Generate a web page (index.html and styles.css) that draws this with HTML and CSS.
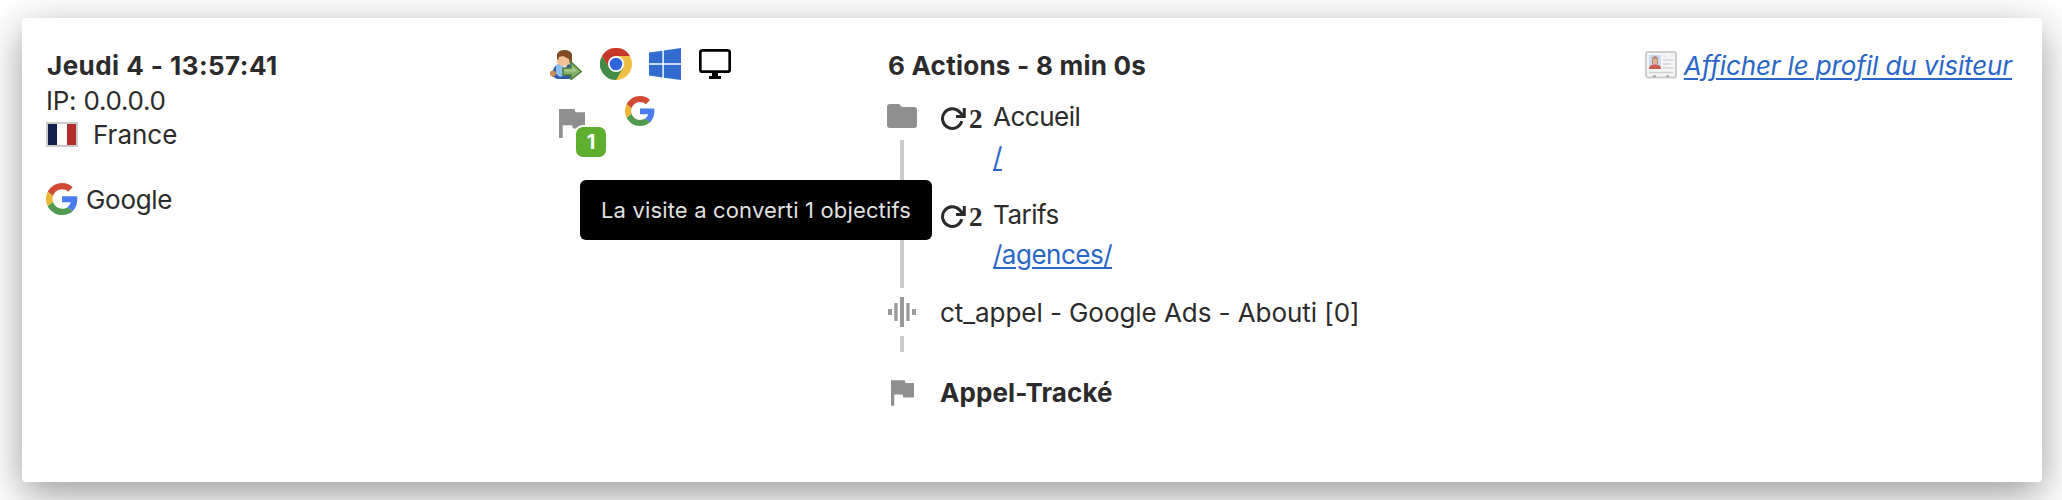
FILE: index.html
```html
<!DOCTYPE html>
<html lang="fr">
<head>
    <meta charset="UTF-8">
    <meta name="viewport" content="width=device-width, initial-scale=1.0">
    <title>Log des visites</title>
    <link rel="stylesheet" href="styles.css">
</head>
<body>
    <svg class="defs" width="0" height="0">
        <symbol id="google" viewBox="0 0 48 48">
            <path fill="#d04a34" d="M24 9.5c3.54 0 6.71 1.22 9.21 3.6l6.85-6.85C35.9 2.38 30.47 0 24 0 14.62 0 6.51 5.38 2.56 13.22l7.98 6.19C12.43 13.72 17.74 9.5 24 9.5z"/>
            <path fill="#4c7bf0" d="M46.98 24.55c0-1.57-.15-3.09-.38-4.55H24v9.02h12.94c-.58 2.96-2.26 5.48-4.78 7.18l7.73 6c4.51-4.18 7.09-10.36 7.09-17.65z"/>
            <path fill="#eeb637" d="M10.53 28.59c-.48-1.45-.76-2.99-.76-4.59s.27-3.14.76-4.59l-7.98-6.19C.92 16.46 0 20.12 0 24c0 3.88.92 7.54 2.56 10.78l7.97-6.19z"/>
            <path fill="#509a4f" d="M24 48c6.48 0 11.93-2.13 15.89-5.81l-7.73-6c-2.15 1.45-4.92 2.3-8.16 2.3-6.26 0-11.57-4.22-13.47-9.91l-7.98 6.19C6.51 42.62 14.62 48 24 48z"/>
        </symbol>
        <symbol id="flag" viewBox="0 0 26 29">
            <path fill="#8f8f8f" d="M0 0h15.5l1 3.2H26v16.3H14l-1-3.3H3.7V29H0z"/>
        </symbol>
        <symbol id="reload" viewBox="0 0 25 23">
            <path fill="none" stroke="#2b2b2b" stroke-width="3" d="M20.8 14.2A9.8 9.8 0 1 1 18.600 5"/>
            <path fill="none" stroke="#2b2b2b" stroke-width="3" d="M23.300 1v8.400h-8.300M22.800 9.200l-4.700-4.500"/>
        </symbol>
    </svg>

    <div class="card">
        <div class="visit-info">
            <div class="title date">Jeudi 4 - 13:57:41</div>
            <div class="line ip">IP: 0.0.0.0</div>
            <div class="line country"><span class="flag-fr"></span>France</div>
            <div class="line referrer"><svg class="icon-google"><use href="#google"/></svg>Google</div>
        </div>

        <div class="visit-icons">
            <div class="icon-row">
                <!-- returning visitor -->
                <svg class="icon" viewBox="0 0 32 32">
                    <path fill="#3459a6" d="M2 28q1-12 8-12h9l6 4-5 11H7z"/>
                    <path fill="#8cc0f2" d="M6 17q6-2 8 1l1 9-5 2-4-3z"/>
                    <path fill="#eef6fc" d="M12 17h5l-2 5z"/>
                    <circle cx="2.800" cy="25.500" r="3" fill="#cf8a50"/>
                    <path fill="#f0c294" d="M7 8h13v7q-2 3-6.500 3T7 15z"/>
                    <path fill="#804a24" d="M7 11V6q2-4 7.500-4T22 6v8l-2 2.500-1-5.500-6-3-4 1-1 3z"/>
                    <path fill="#84b368" stroke="#4f7d3c" stroke-width="1.500" d="M13 20h8v-6l10.300 9.500L21 31.500V27h-8z"/>
                    <path fill="#a9cd90" d="M14.500 21.500H22V18l5 5.500h-12.500z"/>
                </svg>
                <!-- chrome -->
                <svg class="icon" viewBox="0 0 32 32">
                    <circle cx="16" cy="16" r="16" fill="#f1bd42"/>
                    <path fill="#c5382a" d="M2.1 8A16 16 0 0 1 29.9 8H16L9 20z"/>
                    <path fill="#438d49" d="M2.1 8A16 16 0 0 0 16 32l7-12-14-0.2z"/>
                    <circle cx="16" cy="16" r="8" fill="#fff"/>
                    <circle cx="16" cy="16" r="6.3" fill="#3265dc"/>
                </svg>
                <!-- windows -->
                <svg class="icon" viewBox="0 0 32 32">
                    <path fill="#316cce" d="M0 4.6l13.4-1.9v12.6H0zM14.8 2.5L32 0v15.3H14.8zM0 16.8h13.4v12.8L0 27.6zM14.8 16.8H32V32l-17.2-2.3z"/>
                </svg>
                <!-- desktop -->
                <svg class="icon" viewBox="0 0 32 32">
                    <rect x="1.3" y="2.3" width="29.4" height="21.4" rx="2.3" fill="none" stroke="#000" stroke-width="2.7"/>
                    <path fill="#000" d="M13 24h6v4h3v3H10v-3h3z"/>
                </svg>
            </div>
            <div class="icon-row second">
                <div class="goal">
                    <svg class="goal-flag"><use href="#flag"/></svg>
                    <span class="badge">1</span>
                    <div class="tooltip">La visite a converti 1 objectifs</div>
                </div>
                <svg class="search-engine"><use href="#google"/></svg>
            </div>
        </div>

        <div class="visit-actions">
            <div class="title">6 Actions - 8 min 0s</div>
            <ol class="actions">
                <li class="action page">
                    <div class="marker first">
                        <svg class="folder" viewBox="0 0 30 24"><path fill="#8f8f8f" d="M3 0h9l3 3h12q3 0 3 3v15q0 3-3 3H3q-3 0-3-3V3q0-3 3-3z"/></svg>
                        <span class="track"></span>
                    </div>
                    <div class="repeat"><svg class="reload"><use href="#reload"/></svg><span>2</span></div>
                    <div class="page-text">
                        <div>Accueil</div>
                        <a href="#">/</a>
                    </div>
                </li>
                <li class="action page">
                    <div class="marker"><span class="track second-track"></span></div>
                    <div class="repeat"><svg class="reload"><use href="#reload"/></svg><span>2</span></div>
                    <div class="page-text">
                        <div>Tarifs</div>
                        <a href="#">/agences/</a>
                    </div>
                </li>
                <li class="action event">
                    <div class="marker">
                        <svg class="wave" viewBox="0 0 28 30"><path fill="#999" d="M0 12h4v6H0zM6.3 6h3.3v18H6.3zM12 0h4v30h-4zM18.3 6h3.3v18h-3.3zM24 12h4v6h-4z"/></svg>
                        <span class="track short"></span>
                    </div>
                    <div class="event-name">ct_appel - Google Ads - Abouti [0]</div>
                </li>
                <li class="action converted">
                    <div class="marker"><svg class="action-flag"><use href="#flag"/></svg></div>
                    <div class="goal-name">Appel-Tracké</div>
                </li>
            </ol>
        </div>

        <div class="profile">
            <svg class="id-card" viewBox="0 0 32 28">
                <rect x="1" y="1" width="30" height="25.500" rx="2" fill="#f5f5f5" stroke="#cdcdcd" stroke-width="2"/>
                <rect x="4" y="4" width="12" height="14" fill="#cbdcf2"/>
                <path fill="#b58a70" d="M7 7q3-4 6 0v6H7z"/>
                <path fill="#dfb491" d="M8 8h4v5q-2 2-4 0z"/>
                <path fill="#cf5a50" d="M4 18q0-4 4-4.500h4q4 .5 4 4.500z"/>
                <path stroke="#cfd2d6" stroke-width="1.600" d="M18 9h10M18 13h8M18 17h10M4 21.500h24"/>
                <path stroke="#e2e8ef" stroke-width="1.500" d="M18 5h4M25 5h3"/>
                <path fill="#999" d="M8 24.500h3V26H8zM21 24.500h3V26h-3z"/>
            </svg>
            <a href="#">Afficher le profil du visiteur</a>
        </div>
    </div>
</body>
</html>
```

FILE: styles.css
```css
body {
    margin: 0;
    padding: 18px 20px 18px 22px;
    height: 464px;
    overflow: hidden;
    background-color: #fff;
    color: #2b2b2b;
    font-family: Inter, "Liberation Sans", sans-serif;
    font-size: 26px;
    line-height: 35px;
}
a {
    color: #2a66c8;
    text-underline-offset: 3px;
    text-decoration-thickness: 2px;
}
svg {
    display: block;
    flex-shrink: 0;
}
.defs {
    position: absolute;
}
.card {
    display: grid;
    grid-template-columns: 504px 338px 1fr auto;
    box-sizing: border-box;
    height: 464px;
    padding: 30px 30px 0 24px;
    background-color: #fff;
    border-radius: 4px;
    box-shadow: 0 12px 40px rgba(0, 0, 0, 0.4);
}
.title {
    font-weight: bold;
    letter-spacing: 0.25px;
    white-space: nowrap;
}
.date {
    padding-left: 1px;
    letter-spacing: 0.45px;
}

/* visit details */
.line {
    display: flex;
    align-items: center;
    height: 34px;
}
.ip {
    letter-spacing: -0.25px;
}
.flag-fr {
    box-sizing: border-box;
    width: 32px;
    height: 25px;
    margin-right: 15px;
    border: 2px solid #ccc;
    background: linear-gradient(to right, #10224b 33%, #fff 33%, #fff 67%, #b22d2b 67%);
}
.referrer {
    margin-top: 31px;
    letter-spacing: -0.3px;
}
.icon-google {
    width: 32px;
    height: 32px;
    margin-right: 8px;
}

/* visitor icons */
.icon-row {
    display: flex;
    gap: 17.5px;
}
.icon {
    width: 32px;
    height: 32px;
}
.second {
    gap: 40px;
    padding: 16px 0 0 9px;
}
.goal {
    position: relative;
    padding-top: 13px;
}
.goal-flag {
    width: 26px;
    height: 29px;
}
.badge {
    position: absolute;
    left: 17px;
    top: 31px;
    width: 30px;
    height: 30px;
    border-radius: 7px;
    background-color: #5eae30;
    box-shadow: 0 0 0 2px #fff;
    color: #fff;
    font-size: 20px;
    font-weight: bold;
    line-height: 30px;
    text-align: center;
}
.tooltip {
    position: absolute;
    z-index: 1;
    left: 21px;
    top: 84px;
    width: 352px;
    height: 60px;
    border-radius: 6px;
    background-color: #000;
    color: #e0e0e0;
    font-size: 22px;
    letter-spacing: 0.16px;
    line-height: 60px;
    text-align: center;
    white-space: nowrap;
}
.search-engine {
    width: 30px;
    height: 30px;
}

/* actions */
.actions {
    list-style: none;
    margin: 14px 0 0;
    padding: 0;
    line-height: 40px;
}
.action {
    display: flex;
    white-space: nowrap;
}
.page {
    height: 98px;
}
.event {
    height: 80px;
}
.converted {
    font-weight: bold;
}
.marker {
    display: flex;
    flex-direction: column;
    align-items: center;
    width: 28px;
    margin-right: 22px;
}
.first {
    padding-top: 7px;
}
.folder {
    width: 30px;
    height: 24px;
    margin: 0 0 12px;
}
.track {
    flex: 1;
    width: 4px;
    background-color: #ccc;
}
.second-track {
    margin-bottom: 5px;
}
.wave {
    width: 28px;
    height: 30px;
    margin: 4px 0 9px;
}
.short {
    flex: none;
    height: 16px;
}
.event-name {
    padding-left: 2px;
    letter-spacing: -0.06px;
}
.action-flag {
    width: 23px;
    height: 26px;
    margin-top: 7px;
}
.goal-name {
    padding-left: 2px;
    letter-spacing: 0.1px;
}
.repeat {
    display: flex;
    width: 55px;
    font-family: "Liberation Serif", serif;
    font-size: 27px;
    font-weight: bold;
    line-height: 44px;
}
.reload {
    width: 25px;
    height: 23px;
    margin: 10px 3px 0 3px;
}
.page-text {
    letter-spacing: -0.5px;
}
.page-text a {
    display: block;
    width: max-content;
}

/* profile link */
.profile {
    display: flex;
    font-style: italic;
    letter-spacing: -0.13px;
}
.id-card {
    width: 32px;
    height: 28px;
    margin: 3px 7px 0 0;
}
```
